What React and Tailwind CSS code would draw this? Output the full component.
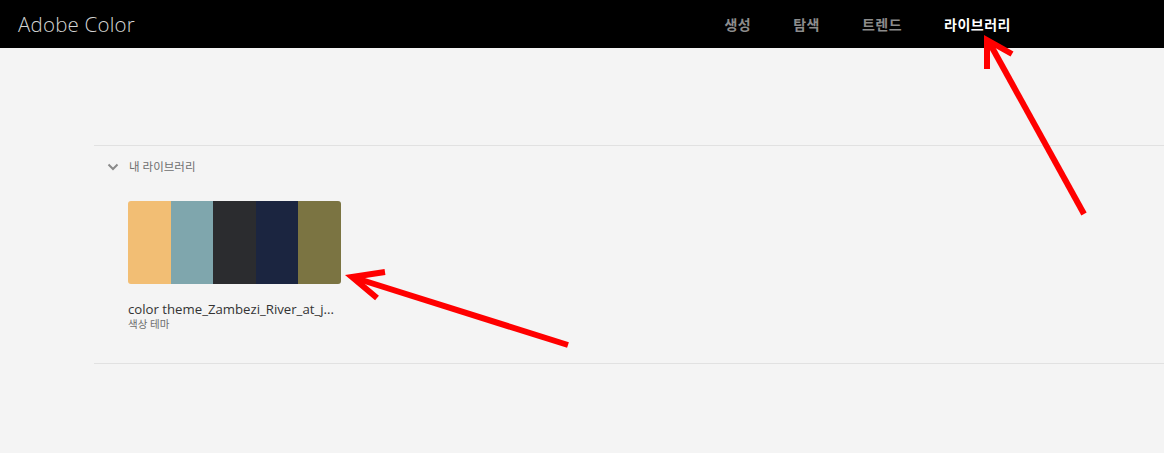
import React from 'react'

const swatches = ['#f2be74', '#7fa6ad', '#2b2c2f', '#1b2540', '#7b7442']

const navItems = [
    { label: '생성', active: false },
    { label: '탐색', active: false },
    { label: '트렌드', active: false },
    { label: '라이브러리', active: true },
]

const font = { fontFamily: '"Open Sans", "Noto Sans CJK KR", sans-serif' }

const App = () => {
    return (
        <div className="relative w-[1164px] h-[453px] bg-[#f4f4f4] overflow-hidden" style={font}>
            <div className="h-12 bg-black flex items-center">
                <div className="pl-[18px] text-[20.5px] font-light text-[#d4d4d4] tracking-[0.2px]">Adobe Color</div>
                <div className="flex ml-auto pr-[153px] gap-[42px]">
                    {navItems.map((item) => (
                        <span
                            key={item.label}
                            className={(item.active ? 'text-white' : 'text-[#8c8c8c]') + ' text-[14px] font-bold tracking-[0.5px]'}
                        >
                            {item.label}
                        </span>
                    ))}
                </div>
            </div>

            <div className="ml-[94px] mt-[97px] border-t border-b border-[#e1e1e1] h-[219px]">
                <div className="flex items-center pl-[13px] pt-[12px] text-[11.5px] text-[#6e6e6e]">
                    <svg width="12" height="8" viewBox="0 0 12 8" className="mr-[10px]">
                        <path d="M1.5 1.5 L6 6 L10.5 1.5" stroke="#8a8a8a" strokeWidth="2" fill="none" />
                    </svg>
                    <span>내 라이브러리</span>
                </div>
                <div className="ml-[34px] mt-[26px] w-[213px]">
                    <div className="flex h-[83px] rounded-[3px] overflow-hidden">
                        {swatches.map((c) => (
                            <div key={c} className="flex-1" style={{ backgroundColor: c }} />
                        ))}
                    </div>
                    <div className="mt-[17px] text-[13.2px] text-[#333] leading-[16px] whitespace-nowrap">color theme_Zambezi_River_at_j...</div>
                    <div className="text-[10.5px] text-[#6e6e6e] leading-[14px]">색상 테마</div>
                </div>
            </div>

            {/* red annotation arrows */}
            <svg className="absolute left-0 top-0 pointer-events-none" width="1164" height="453">
                <g stroke="#ff0000" strokeWidth="6" fill="none" strokeLinecap="butt" strokeLinejoin="miter">
                    <line x1="568" y1="345" x2="352" y2="277" />
                    <polyline points="385,272 352,277 377,298" />
                    <line x1="1084" y1="214" x2="989" y2="42" />
                    <polyline points="987,69 987,40 1012,54" />
                </g>
            </svg>
        </div>
    )
}

export default App
